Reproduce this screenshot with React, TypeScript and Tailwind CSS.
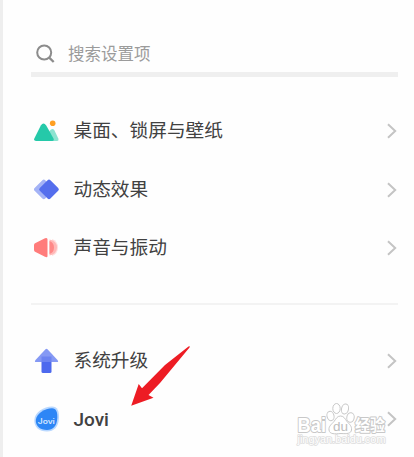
import type { ReactNode } from 'react';

const cjk = "font-['Roboto','Noto_Sans_CJK_SC',sans-serif]";

function Chevron() {
  return (
    <svg className="ml-auto h-4 w-3 shrink-0" viewBox="0 0 12 16" fill="none" stroke="#c4c4c4" strokeWidth="2">
      <path d="M2 1.200 9.200 8 2 14.800" />
    </svg>
  );
}

function Row({ icon, label, latin = false }: { icon: ReactNode; label: string; latin?: boolean }) {
  return (
    <div className="flex h-[58.5px] items-center">
      <svg className="ml-[3px] h-7 w-7 shrink-0" viewBox="0 0 28 28">
        {icon}
      </svg>
      <span className={`ml-[11.5px] whitespace-nowrap leading-7 text-[#414141] ${latin ? 'pt-0.5 text-[19px] font-medium' : 'text-[18.7px]'}`}>
        {label}
      </span>
      <Chevron />
    </div>
  );
}

const wallpaper = (
  <>
    <path d="M10 24 15.500 14Q18.500 10.500 20.500 13.500L24.300 21.500Q25 24 23 24Z" fill="#8be3d0" />
    <path d="M.3 21.500 6.800 8.500Q9.500 4.500 12.200 8.500L19.500 21.500Q20.500 24 18 24H2Q-.5 24 .3 21.500Z" fill="#25c9a9" />
    <circle cx="18.700" cy="6.200" r="2.800" fill="#ff9f22" />
  </>
);
const effects = (
  <>
    <rect x="2.300" y="5.900" width="15" height="15" rx="2" transform="rotate(45 9.800 13.400)" fill="#a4b3f6" />
    <rect x="7.500" y="5.900" width="15" height="15" rx="2" transform="rotate(45 15 13.400)" fill="#546eed" />
  </>
);
const sound = (
  <>
    <path d="M18 5a9 9 0 0 1 0 17Z" fill="#ffe0df" />
    <path d="M15.500 5.500Q23 7 23 13.500T15.500 21.500Z" fill="#ffb8b7" />
    <path d="M15.500 7Q20 8.500 20 13.500T15.500 20Z" fill="#ff8887" />
    <path d="M1.500 9 11 4.300Q13.500 3.200 13.500 5.500V22Q13.500 24 11 22.800L1.500 18Q0 17.500 0 16V11Q0 9.500 1.500 9Z" fill="#ff7c7b" />
  </>
);
const upgrade = (
  <>
    <path d="M7.500 12H17.500V24.500Q17.500 26 16 26H9Q7.500 26 7.500 24.500Z" fill="#4d69ee" />
    <path d="M11.500 2.300Q12.500 1.300 13.500 2.300L23.500 13Q25 15 23 15H2Q0 15 1.500 13Z" fill="#8599f4" />
    <path d="M7.500 9.500H17.500V15H7.500Z" fill="#6c83f1" />
  </>
);
const jovi = (
  <>
    <path d="M18 1.500C23.500 1.500 25.200 6 25 13C24.500 22 20 26.500 13 26.500C5 26.500 0 22 .3 15C.7 7 10 1.500 18 1.500Z" fill="#b9d8ff" />
    <path d="M18 3.200C22.300 3.200 23.500 7 23.300 13C23 21 19 25 13 25C6 25 1.500 21 1.800 15C2.300 8.500 11 3.200 18 3.200Z" fill="#2d86f6" />
    <text x="3.800" y="18.500" textLength="17" lengthAdjust="spacingAndGlyphs" fontSize="7" fontWeight="600" fontFamily="Inter, sans-serif" fill="#d8e9ff">Jovi</text>
  </>
);

function Watermark() {
  return (
    <svg className="absolute left-[289px] top-[398px] h-[52px] w-[100px]" viewBox="0 0 100 52" fill="#fff" stroke="#c8c8c8">
      <g fontFamily="'Liberation Sans', 'Noto Sans CJK SC', sans-serif" paintOrder="stroke" strokeLinejoin="round">
        <text x="5.500" y="33.500" fontSize="21" fontWeight="bold" textLength="28.500" lengthAdjust="spacingAndGlyphs" strokeWidth="2">Bai</text>
        <text x="63" y="33" fontSize="15.500" fontWeight="bold" textLength="30" lengthAdjust="spacingAndGlyphs" strokeWidth="2">经验</text>
        <text x="5.500" y="45" fontSize="10" textLength="88" lengthAdjust="spacingAndGlyphs" strokeWidth="1.500" stroke="#dddddd">jingyan.baidu.com</text>
      </g>
      <ellipse cx="38.500" cy="18" rx="3.500" ry="4.700" transform="rotate(-15 38.500 18)" />
      <ellipse cx="44.500" cy="10.500" rx="3.700" ry="5" />
      <ellipse cx="53" cy="11" rx="3.500" ry="5" transform="rotate(12 53 11)" />
      <ellipse cx="58.500" cy="19.500" rx="3.700" ry="4.800" transform="rotate(10 58.500 19.500)" />
      <path d="M48.500 18C52 18 53 21 55 23.500C57.500 26.500 60 28 59.500 32C59 35.500 55 36 49 35.500C43 36 37.500 36.500 37 32C36.500 28 40 26 42 23.500C44 21 45 18 48.500 18Z" />
      <text x="41" y="33" fontSize="13" fontFamily="'Liberation Sans', sans-serif" textLength="15" lengthAdjust="spacingAndGlyphs" fill="#bdbdbd" stroke="none">du</text>
    </svg>
  );
}

export default function App() {
  return (
    <main className={`relative h-[457px] w-[414px] overflow-hidden border-l-[3px] border-[#eeeeee] bg-[#fefefe] pl-7 pr-4 ${cjk}`}>
      <div className="mt-9 flex h-[41px] items-center border-b-[5px] border-[#efefef]">
        <svg className="ml-[5px] h-5 w-5" viewBox="0 0 20 20" fill="none" stroke="#8c8c8c" strokeWidth="2">
          <circle cx="8.200" cy="8.500" r="7" />
          <path d="m13.200 13.700 4.500 4.300" strokeWidth="2.300" />
        </svg>
        <span className="ml-3 pt-0.5 text-[16.5px] text-[#9b9b9b]">搜索设置项</span>
      </div>
      <div className="mt-[25px]">
        <Row icon={wallpaper} label="桌面、锁屏与壁纸" />
        <Row icon={effects} label="动态效果" />
        <Row icon={sound} label="声音与振动" />
      </div>
      <div className="mt-[25px] h-0.5 bg-[#f3f3f3]" />
      <div className="mt-[27px]">
        <Row icon={upgrade} label="系统升级" />
        <Row icon={jovi} label="Jovi" latin />
      </div>
      <svg className="absolute left-[127px] top-[344px] h-[64px] w-[64px]" viewBox="0 0 64 64" fill="#ed1c24">
        <path d="M58.500 2.500Q60.500 1.500 59.500 3.500L30 39 18.500 51 23.500 53.700 1.200 61.700 8.700 40 12 44.300 35 21Z" />
      </svg>
      <Watermark />
    </main>
  );
}
